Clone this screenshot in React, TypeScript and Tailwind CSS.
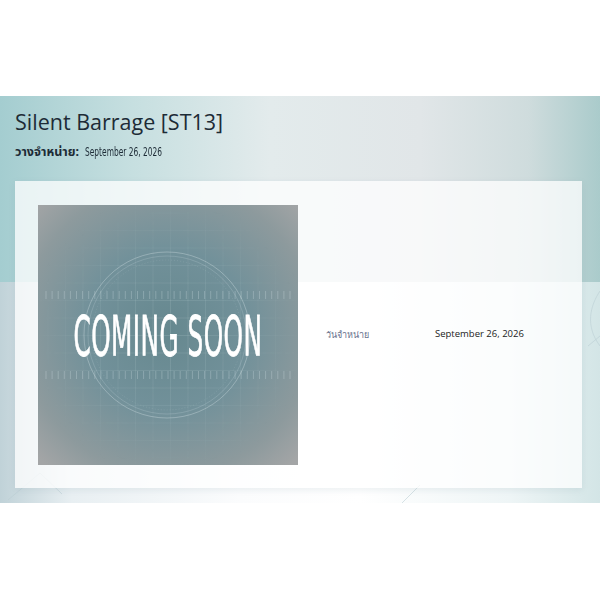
import * as React from 'react'

const ticks = Array.from({ length: 41 }, (_, i) => 8 + i * 6.1)
const gridX = Array.from({ length: 15 }, (_, i) => 10 + i * 17.5)
const gridY = Array.from({ length: 15 }, (_, i) => 8 + i * 17.5)

function ComingSoonArt() {
  return (
    <div className="relative h-[260px] w-[260px] shrink-0 overflow-hidden">
      <svg width="260" height="260" viewBox="0 0 260 260" className="absolute inset-0">
        <defs>
          <radialGradient id="cs-bg" cx="50%" cy="48%" r="70%">
            <stop offset="0%" stopColor="#66888f" />
            <stop offset="45%" stopColor="#72919a" />
            <stop offset="80%" stopColor="#8d9a9d" />
            <stop offset="100%" stopColor="#a3a5a6" />
          </radialGradient>
          <radialGradient id="cs-fade" cx="50%" cy="50%" r="55%">
            <stop offset="0%" stopColor="#fff" stopOpacity="1" />
            <stop offset="100%" stopColor="#fff" stopOpacity="0" />
          </radialGradient>
          <mask id="cs-mask">
            <rect width="260" height="260" fill="url(#cs-fade)" />
          </mask>
        </defs>
        <rect width="260" height="260" fill="url(#cs-bg)" />
        {/* faint grid */}
        <g stroke="#dbe9ec" strokeOpacity="0.2" strokeWidth="0.8" mask="url(#cs-mask)">
          {gridX.map(x => (
            <line key={'v' + x} x1={x} y1="0" x2={x} y2="260" />
          ))}
          {gridY.map(y => (
            <line key={'h' + y} x1="0" y1={y} x2="260" y2={y} />
          ))}
        </g>
        {/* rings */}
        <g fill="none" stroke="#e4f0f2">
          <circle cx="129" cy="130" r="83" strokeOpacity="0.35" strokeWidth="0.9" />
          <circle cx="129" cy="130" r="79" strokeOpacity="0.25" strokeWidth="0.7" />
          <circle cx="129" cy="130" r="75" strokeOpacity="0.2" strokeWidth="0.6" strokeDasharray="1 2" />
        </g>
        {/* tick rows */}
        <g stroke="#e4f0f2" strokeOpacity="0.32" strokeWidth="0.8">
          {ticks.map(x => (
            <line key={'a' + x} x1={x} y1="86" x2={x} y2="94" />
          ))}
          {ticks.map(x => (
            <line key={'b' + x} x1={x} y1="166" x2={x} y2="174" />
          ))}
        </g>
      </svg>
      <div className="absolute inset-0 flex items-center justify-center pt-[2px]">
        <span className="inline-block origin-center scale-x-[0.49] whitespace-nowrap font-['DejaVu_Sans_Condensed','DejaVu_Sans',sans-serif] text-[56px] font-normal leading-none tracking-[1px] text-white [-webkit-text-stroke:0.8px_white]">
          COMING SOON
        </span>
      </div>
    </div>
  )
}

export default function App() {
  return (
    <div className="h-[600px] w-[600px] bg-white font-['Open_Sans',sans-serif]">
      <div className="h-[96px]" />
      <section className="relative h-[407px] overflow-hidden">
        {/* backdrop bands */}
        <div className="absolute inset-0 flex flex-col">
          <div className="h-[186px] bg-[linear-gradient(90deg,#a4cdd0_0%,#c6dfe0_22%,#e3ebec_45%,#e1e6e8_70%,#cfdcdd_88%,#aacbcb_100%)]" />
          <div className="flex-1 bg-[linear-gradient(90deg,#c0d2d8_0%,#e8eff2_12%,#fbfcfd_40%,#ffffff_60%,#eef5f6_85%,#d3e5e6_100%)]" />
        </div>
        <svg className="absolute inset-0" width="600" height="407" viewBox="0 0 600 407">
          <g fill="none" stroke="#b9cdd2" strokeWidth="0.8" strokeOpacity="0.7">
            <path d="M8 404 L40 377" />
            <path d="M40 377 L62 398" />
            <path d="M402 407 L420 389" />
            <path d="M600 195 C590 210 585 230 600 250" />
            <path d="M588 250 L600 240" />
          </g>
        </svg>

        <div className="relative px-[15px] pt-[11px]">
          <h1 className="text-[21.5px] leading-[30px] text-[#1d2b36]">Silent Barrage [ST13]</h1>
          <p className="mt-[6px] flex items-center text-[12.5px] leading-[18px] text-[#1d2b36]">
            <span className="font-bold font-['Noto_Sans','Noto_Sans_Thai',sans-serif]">วางจำหน่าย:</span>
            <span className="ml-[6px] inline-block origin-left scale-x-[0.64] whitespace-nowrap font-['DejaVu_Sans_Condensed','DejaVu_Sans',sans-serif] text-[13px]">
              September 26, 2026
            </span>
          </p>

          <div className="mt-[20px] flex h-[307px] w-[567px] items-center bg-white/75 p-[23px] shadow-[0_2px_6px_rgba(120,150,160,0.15)]">
            <ComingSoonArt />
            <div className="ml-[28px] flex items-center">
              <span className="w-[109px] text-[9px] font-medium text-[#66708c]">วันจำหน่าย</span>
              <span className="text-[9.5px] text-[#222]">September 26, 2026</span>
            </div>
          </div>
        </div>
      </section>
    </div>
  )
}
